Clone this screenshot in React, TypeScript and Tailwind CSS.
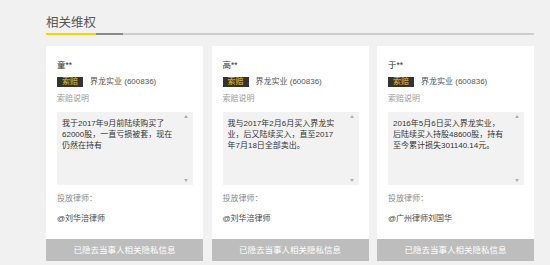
const cards = [
  {
    name: "童**",
    lines: ["我于2017年9月前陆续购买了", "62000股，一直亏损被套，现在", "仍然在持有"],
    lawyer: "@刘华涪律师",
  },
  {
    name: "高**",
    lines: ["我与2017年2月6月买入界龙实", "业，后又陆续买入，直至2017", "年7月18日全部卖出。"],
    lawyer: "@刘华涪律师",
  },
  {
    name: "于**",
    lines: ["2016年5月6日买入界龙实业，", "后陆续买入持股48600股，持有", "至今累计损失301140.14元。"],
    lawyer: "@广州律师刘国华",
  },
];

function Card({ name, lines, lawyer }: { name: string; lines: string[]; lawyer: string }) {
  return (
    <div className="flex flex-col bg-white h-[215px]">
      <div className="flex flex-col px-[11px] pt-[14px] pr-[10px]">
        <div className="text-[8.5px] leading-[10px] text-[#333]">{name}</div>

        {/* badge + stock */}
        <div className="flex items-center mt-[7px] h-[10px]">
          <span className="bg-[#333] text-[#f0c419] text-[8px] leading-[10px] px-[5px]">索赔</span>
          <span className="ml-[7px] text-[8px] leading-[10px] text-[#555]">界龙实业 (600836)</span>
        </div>

        <div className="mt-[7px] text-[8px] leading-[10px] text-[#999]">索赔说明</div>

        {/* fake textarea */}
        <div className="relative mt-[8px] h-[73px] bg-[#f2f2f2] pl-[5px] pt-[6px] pr-[14px] text-[8px] leading-[11px] text-[#333]">
          {lines.map((l) => (
            <div key={l} className="whitespace-nowrap">
              {l}
            </div>
          ))}
          <span className="absolute right-[5px] top-[3px] w-0 h-0 border-x-[2.5px] border-x-transparent border-b-[3px] border-b-[#b0b0b0]" />
          <span className="absolute right-[5px] bottom-[3px] w-0 h-0 border-x-[2.5px] border-x-transparent border-t-[3px] border-t-[#b0b0b0]" />
        </div>

        <div className="mt-[9px] text-[8px] leading-[10px] text-[#888]">投放律师：</div>
        <div className="mt-[10px] text-[8px] leading-[10px] text-[#444]">{lawyer}</div>
      </div>

      <div className="mt-auto h-[22px] flex items-center justify-center bg-[#bdbdbd] text-white text-[8.5px]">
        已隐去当事人相关隐私信息
      </div>
    </div>
  );
}

export default function App() {
  return (
    <div
      className="w-[550px] h-[265px] bg-[#f1f1f1] overflow-hidden"
      style={{ fontFamily: '"Liberation Sans", "Noto Sans CJK SC", sans-serif' }}
    >
      {/* header */}
      <div className="ml-[46px] w-[488px] pt-[15px] flex items-end">
        <span className="text-[12.5px] leading-[17px] text-[#555] border-b-2 border-[#ffd000] pb-[1px]">相关维权</span>
        <span className="w-[27px] h-[2px] bg-[#8a8a8a]" />
        <span className="flex-1 h-[2px] bg-[#cdcdcd]" />
      </div>

      {/* cards */}
      <div className="ml-[46px] w-[488px] mt-[11px] grid grid-cols-3 gap-[8.5px]">
        {cards.map((c) => (
          <Card key={c.name} {...c} />
        ))}
      </div>
    </div>
  );
}
